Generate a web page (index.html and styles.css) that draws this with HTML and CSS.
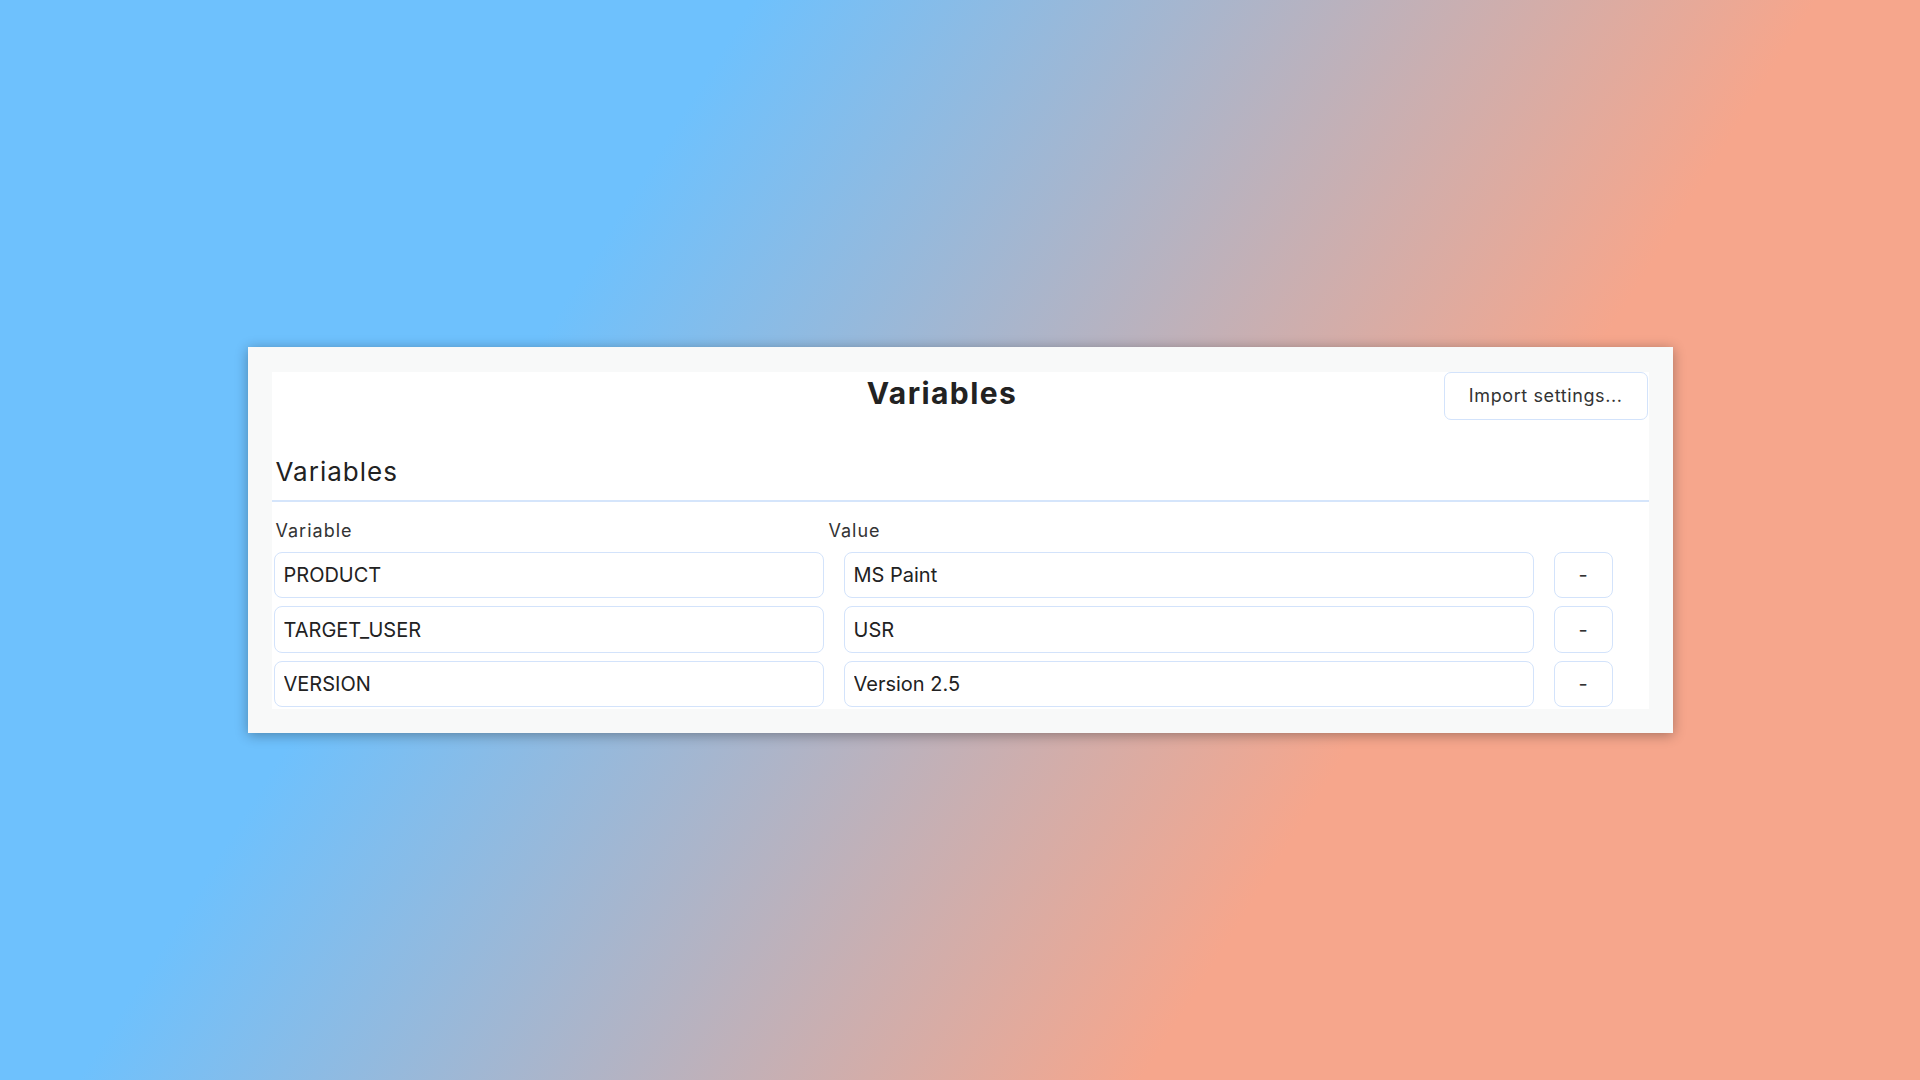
FILE: index.html
```html
<!DOCTYPE html>
<html lang="en">
<head>
    <meta charset="UTF-8">
    <meta name="viewport" content="width=device-width, initial-scale=1.0">
    <title>Variables</title>
    <link rel="stylesheet" href="styles.css">
</head>
<body>
    <div class="card">
        <div class="panel">
            <div class="panel-header">
                <span></span>
                <h1 class="title">Variables</h1>
                <button class="import-btn">Import settings...</button>
            </div>

            <h2 class="section-title">Variables</h2>

            <div class="var-head">
                <label>Variable</label>
                <label>Value</label>
            </div>

            <div class="var-list">
                <div class="var-row">
                    <input type="text" class="field" value="PRODUCT">
                    <input type="text" class="field" value="MS Paint">
                    <button class="remove-btn">-</button>
                </div>
                <div class="var-row">
                    <input type="text" class="field" value="TARGET_USER">
                    <input type="text" class="field" value="USR">
                    <button class="remove-btn">-</button>
                </div>
                <div class="var-row">
                    <input type="text" class="field" value="VERSION">
                    <input type="text" class="field" value="Version 2.5">
                    <button class="remove-btn">-</button>
                </div>
            </div>
        </div>
    </div>
</body>
</html>
```

FILE: styles.css
```css
html, body {
    margin: 0;
    height: 100%;
}
body {
    font-family: Inter, "Noto Sans", sans-serif;
    color: #212529;
    background: linear-gradient(122deg, #6ec1fd 29%, #f6a68c 70%);
    display: flex;
    align-items: center;
    justify-content: center;
}
.card {
    width: 1425px;
    box-sizing: border-box;
    padding: 25px 24px 24px 24px;
    background-color: #f8f9f9;
    box-shadow: 0 2px 12px rgba(0, 0, 0, 0.32);
}
.panel {
    background-color: #fff;
    padding-bottom: 2px;
}
.panel-header {
    display: grid;
    grid-template-columns: 1fr auto 1fr;
    align-items: start;
    padding-right: 36px;
}
.title {
    margin: 3px 0 0 0;
    font-size: 30px;
    font-weight: 700;
    letter-spacing: 1.4px;
    color: #222;
}
.import-btn {
    justify-self: end;
    margin-right: -35px;
    height: 48px;
    padding: 0 24px;
    font-family: inherit;
    font-size: 18px;
    letter-spacing: 0.6px;
    color: #333;
    background: #fff;
    border: 1.5px solid #d3e3fb;
    border-radius: 7px;
}
.section-title {
    margin: 36px 0 0 0;
    padding: 0 0 13px 4px;
    font-size: 26px;
    font-weight: 400;
    letter-spacing: 1px;
    color: #222;
    border-bottom: 2px solid #d5e5fb;
}
.var-head {
    display: grid;
    grid-template-columns: 553px 1fr;
    margin: 18px 0 11px 0;
    padding-left: 4px;
    font-size: 18px;
    letter-spacing: 1px;
    color: #333;
}
.var-list {
    display: flex;
    flex-direction: column;
    gap: 8px;
    padding-left: 2px;
}
.var-row {
    display: grid;
    grid-template-columns: 550px 690px 59px;
    gap: 20px;
}
.field {
    box-sizing: border-box;
    height: 46.5px;
    padding: 0 9px;
    font-family: inherit;
    font-size: 20px;
    color: #222;
    background: #fff;
    border: 1.5px solid #d3e3fb;
    border-radius: 8px;
    outline: none;
}
.remove-btn {
    height: 46.5px;
    font-family: inherit;
    font-size: 20px;
    color: #333;
    background: #fff;
    border: 1.5px solid #d3e3fb;
    border-radius: 8px;
    padding: 0;
}
```
